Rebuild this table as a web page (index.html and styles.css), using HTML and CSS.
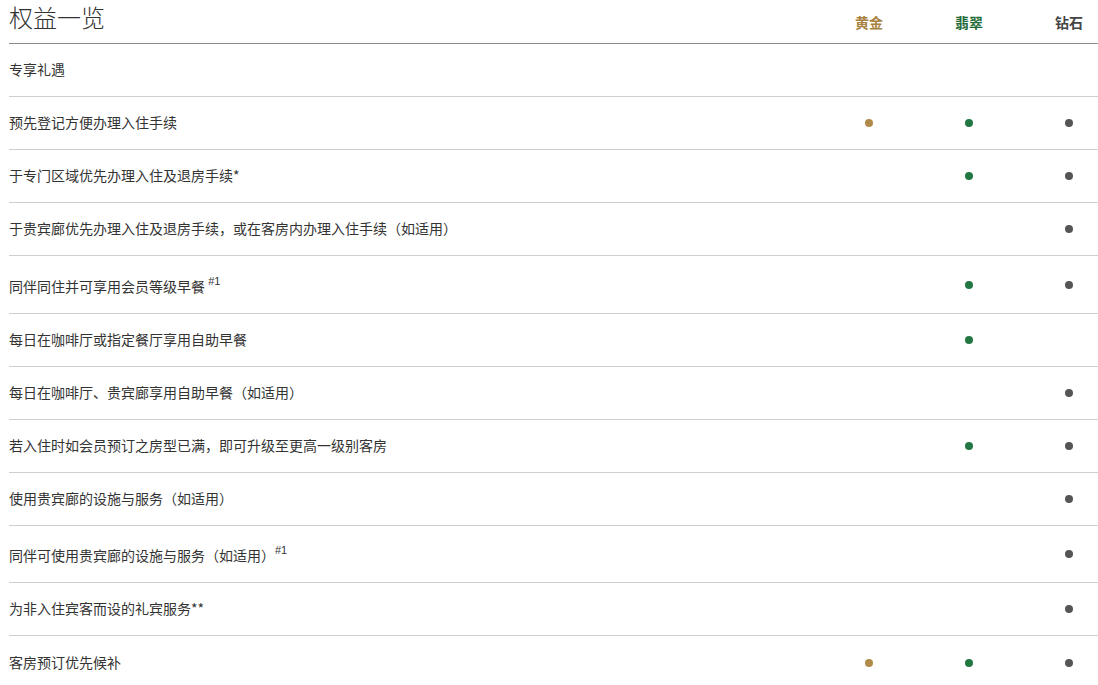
FILE: index.html
```html
<!DOCTYPE html>
<html lang="zh-CN">
<head>
<meta charset="utf-8">
<link rel="stylesheet" href="styles.css">
</head>
<body>
<div class="table">
  <div class="row head">
    <div class="title">权益一览</div>
    <div class="col gold">黄金</div>
    <div class="col jade">翡翠</div>
    <div class="col diamond">钻石</div>
  </div>
  <div class="row">
    <div class="label">专享礼遇</div><div class="col"></div><div class="col"></div><div class="col"></div>
  </div>
  <div class="row">
    <div class="label">预先登记方便办理入住手续</div>
    <div class="col"><span class="dot gold-dot"></span></div>
    <div class="col"><span class="dot jade-dot"></span></div>
    <div class="col"><span class="dot diamond-dot"></span></div>
  </div>
  <div class="row">
    <div class="label">于专门区域优先办理入住及退房手续*</div>
    <div class="col"></div>
    <div class="col"><span class="dot jade-dot"></span></div>
    <div class="col"><span class="dot diamond-dot"></span></div>
  </div>
  <div class="row">
    <div class="label">于贵宾廊优先办理入住及退房手续，或在客房内办理入住手续（如适用）</div>
    <div class="col"></div>
    <div class="col"></div>
    <div class="col"><span class="dot diamond-dot"></span></div>
  </div>
  <div class="row tall">
    <div class="label">同伴同住并可享用会员等级早餐 <sup>#1</sup></div>
    <div class="col"></div>
    <div class="col"><span class="dot jade-dot"></span></div>
    <div class="col"><span class="dot diamond-dot"></span></div>
  </div>
  <div class="row">
    <div class="label">每日在咖啡厅或指定餐厅享用自助早餐</div>
    <div class="col"></div>
    <div class="col"><span class="dot jade-dot"></span></div>
    <div class="col"></div>
  </div>
  <div class="row">
    <div class="label">每日在咖啡厅、贵宾廊享用自助早餐（如适用）</div>
    <div class="col"></div>
    <div class="col"></div>
    <div class="col"><span class="dot diamond-dot"></span></div>
  </div>
  <div class="row">
    <div class="label">若入住时如会员预订之房型已满，即可升级至更高一级别客房</div>
    <div class="col"></div>
    <div class="col"><span class="dot jade-dot"></span></div>
    <div class="col"><span class="dot diamond-dot"></span></div>
  </div>
  <div class="row">
    <div class="label">使用贵宾廊的设施与服务（如适用）</div>
    <div class="col"></div>
    <div class="col"></div>
    <div class="col"><span class="dot diamond-dot"></span></div>
  </div>
  <div class="row tall short">
    <div class="label">同伴可使用贵宾廊的设施与服务（如适用）<sup>#1</sup></div>
    <div class="col"></div>
    <div class="col"></div>
    <div class="col"><span class="dot diamond-dot"></span></div>
  </div>
  <div class="row">
    <div class="label">为非入住宾客而设的礼宾服务**</div>
    <div class="col"></div>
    <div class="col"></div>
    <div class="col"><span class="dot diamond-dot"></span></div>
  </div>
  <div class="row last">
    <div class="label">客房预订优先候补</div>
    <div class="col"><span class="dot gold-dot"></span></div>
    <div class="col"><span class="dot jade-dot"></span></div>
    <div class="col"><span class="dot diamond-dot"></span></div>
  </div>
</div>
</body>
</html>
```

FILE: styles.css
```css
* { box-sizing: border-box; }
html, body { margin: 0; padding: 0; background: #fff; }
body {
  font-family: "Noto Sans CJK SC", "Noto Sans", sans-serif;
  color: #333;
  overflow: hidden;
}
.table {
  padding-left: 9px;
  width: 1098px;
}
.row {
  display: grid;
  grid-template-columns: 1fr 58px 58px 58px;
  column-gap: 42px;
  align-items: center;
  height: 53px;
  border-bottom: 1px solid #cfcfcf;
  font-size: 14px;
}
.row.tall { height: 58px; }
.row.tall.short { height: 57px; }
.row.last { border-bottom: none; }
.row.head {
  height: 44px;
  border-bottom: 1px solid #8a8a8a;
  align-items: start;
}
.title {
  font-size: 24px;
  font-weight: 300;
  line-height: 34px;
  color: #333;
}
.head .col {
  font-weight: 700;
  font-size: 14px;
  line-height: 20px;
  padding-top: 12px;
}
.col { text-align: center; display: flex; justify-content: center; align-items: center; }
.gold { color: #a8823f; }
.jade { color: #1f6b38; }
.diamond { color: #444; }
.label { line-height: 20px; padding-bottom: 2px; }
.tall .label { padding-top: 2px; padding-bottom: 0; }
sup {
  font-family: "Liberation Sans", Arial, sans-serif;
  font-size: 11px;
  line-height: 0;
  vertical-align: 7px;
}
.dot {
  display: block;
  width: 8px;
  height: 8px;
  border-radius: 50%;
}
.gold-dot { background: #b08a48; }
.jade-dot { background: #237743; }
.diamond-dot { background: #555; }
```
